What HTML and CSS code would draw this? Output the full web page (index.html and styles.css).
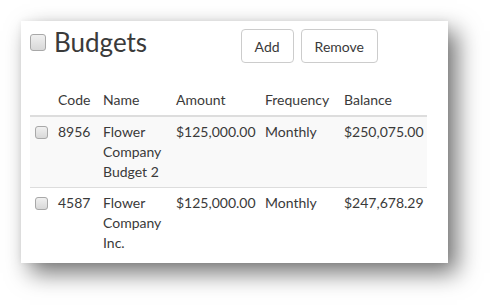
FILE: index.html
```html
<!DOCTYPE html>
<html lang="en">

<head>
    <meta http-equiv="Content-Type" content="text/html; charset=UTF-8">
    <meta name="viewport" content="width=device-width, initial-scale=1.0">
    <title>Budgets</title>
    <link rel="stylesheet" href="styles.css">
</head>

<body>
    <div class="card">
        <div class="toolbar">
            <label class="title">
                <input type="checkbox" class="chk chk-big">
                <span>Budgets</span>
            </label>
            <div class="actions">
                <button class="btn">Add</button>
                <button class="btn">Remove</button>
            </div>
        </div>

        <table class="budgets">
            <colgroup>
                <col class="c-check">
                <col class="c-code">
                <col class="c-name">
                <col class="c-amount">
                <col class="c-freq">
                <col class="c-balance">
            </colgroup>
            <thead>
                <tr>
                    <th></th>
                    <th>Code</th>
                    <th>Name</th>
                    <th>Amount</th>
                    <th>Frequency</th>
                    <th>Balance</th>
                </tr>
            </thead>
            <tbody>
                <tr class="odd">
                    <td><input type="checkbox" class="chk"></td>
                    <td>8956</td>
                    <td>Flower Company Budget 2</td>
                    <td>$125,000.00</td>
                    <td>Monthly</td>
                    <td class="num">$250,075.00</td>
                </tr>
                <tr>
                    <td><input type="checkbox" class="chk"></td>
                    <td>4587</td>
                    <td>Flower Company Inc.</td>
                    <td>$125,000.00</td>
                    <td>Monthly</td>
                    <td class="num">$247,678.29</td>
                </tr>
            </tbody>
        </table>
    </div>
</body>

</html>
```

FILE: styles.css
```css
html,
body {
    height: 100%;
}

body {
    margin: 0;
    padding: 21px 0 0 21px;
    box-sizing: border-box;
    background: #ffffff;
    font-family: Lato, "Open Sans", sans-serif;
    font-size: 14px;
    color: #3a3a3a;
}

.card {
    width: 409px;
    padding: 8px 9px 5px 9px;
    background: #ffffff;
    box-shadow: 9px 10px 22px rgba(0, 0, 0, 0.55), 0 0 6px rgba(0, 0, 0, 0.06);
}

.toolbar {
    display: flex;
    align-items: flex-start;
    padding-right: 61px;
}

.title {
    display: flex;
    align-items: center;
    gap: 8px;
    font-size: 26px;
    line-height: 30px;
    margin-top: -2px;
}

.actions {
    display: flex;
    gap: 7px;
    margin-left: auto;
}

.btn {
    font-family: inherit;
    font-size: 14px;
    color: #3a3a3a;
    background: #ffffff;
    border: 1px solid #cccccc;
    border-radius: 4px;
    height: 34px;
    padding: 0 13px;
    cursor: pointer;
}

.chk {
    -webkit-appearance: none;
    appearance: none;
    display: block;
    margin: 0;
    width: 13px;
    height: 13px;
    border: 1px solid #a8a8a8;
    border-radius: 3px;
    background: linear-gradient(to bottom, #f0f0f0, #d8d8d8);
}

.chk-big {
    width: 16px;
    height: 17px;
}

.budgets {
    margin-top: 22px;
    border-collapse: collapse;
    table-layout: fixed;
    width: 397px;
}

.c-check { width: 23px; }
.c-code { width: 45px; }
.c-name { width: 73px; }
.c-amount { width: 89px; }
.c-freq { width: 79px; }
.c-balance { width: 88px; }

.budgets th,
.budgets td {
    padding: 5px;
    line-height: 20px;
    text-align: left;
    vertical-align: top;
    font-weight: normal;
}

.budgets thead th {
    border-bottom: 2px solid #dddddd;
}

.budgets tbody td {
    border-bottom: 1px solid #dddddd;
}

.budgets tbody tr:last-child td {
    border-bottom: none;
}

.budgets td .chk {
    margin-top: 4px;
}

.budgets tr.odd td {
    background: #f9f9f9;
}

.budgets .num {
    text-align: right;
}
```
